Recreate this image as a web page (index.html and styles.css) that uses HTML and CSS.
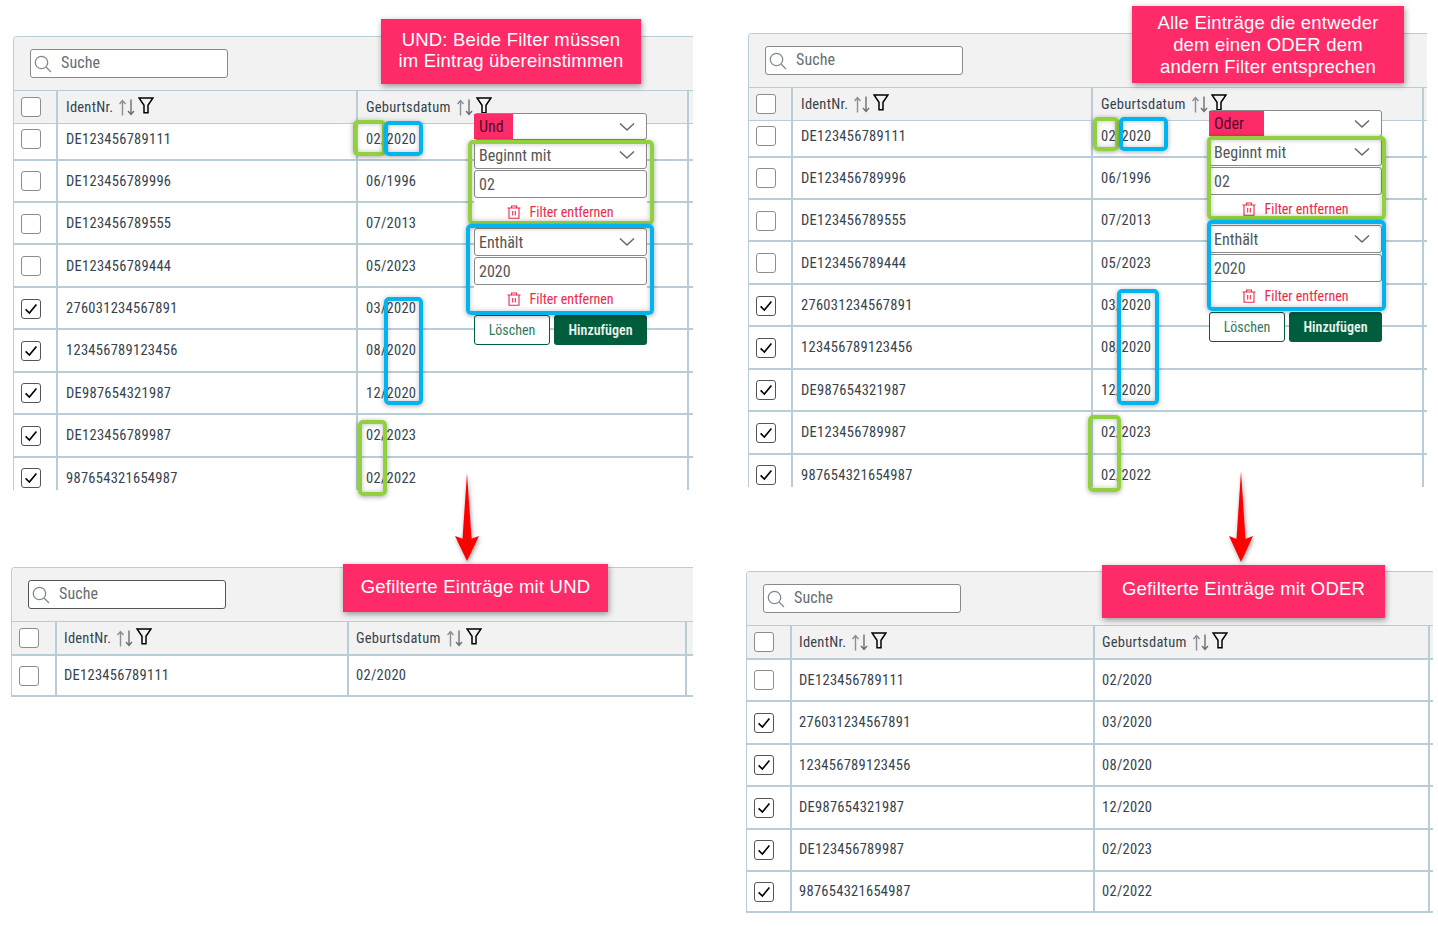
FILE: index.html
```html
<!DOCTYPE html>
<html lang="de">
<head>
<meta charset="utf-8">
<title>Filter UND / ODER</title>
<link rel="stylesheet" href="styles.css">
</head>
<body>
<svg class="sprite" aria-hidden="true">
  <symbol id="i-search" viewBox="0 0 18 18"><circle cx="7.5" cy="7.5" r="6.2" fill="none" stroke="#7f8a90" stroke-width="1.3"/><path d="M12 12l5 5" stroke="#7f8a90" stroke-width="1.3" fill="none"/></symbol>
  <symbol id="i-sort" viewBox="0 0 16 17"><path d="M3.5 16.5V1.5M.5 5L3.5 1.5L6.5 5" fill="none" stroke="#8a8f93" stroke-width="1.4"/><path d="M12 .5V15.5M9 12L12 15.5L15 12" fill="none" stroke="#6a7075" stroke-width="1.4"/></symbol>
  <symbol id="i-filter" viewBox="0 0 16 17"><path d="M1 1H15L10 8.2V15.8H6V8.2Z" fill="none" stroke="#000" stroke-width="1.5"/></symbol>
  <symbol id="i-check" viewBox="0 0 20 20"><path d="M4 10.5L8.2 14.5L16 5" fill="none" stroke="#000" stroke-width="1.8"/></symbol>
  <symbol id="i-chev" viewBox="0 0 16 10"><path d="M1 1.5L8 8L15 1.5" fill="none" stroke="#6a6a6a" stroke-width="1.6"/></symbol>
  <symbol id="i-trash" viewBox="0 0 14 14"><path d="M.5 3H13.5M2 3V13.2H12V3M4.5 3V1H9.5V3M5.7 6V10.5M8.3 6V10.5" fill="none" stroke="#ec2a49" stroke-width="1.1"/></symbol>
</svg>

<main class="canvas">

  <section class="panel panel-a">
    <div class="toolbar"><label class="search"><svg class="search-icon"><use href="#i-search"/></svg><span>Suche</span></label></div>
    <div class="row head"><div class="cell"><span class="box"></span></div><div class="cell"><span>IdentNr.</span><svg class="sort"><use href="#i-sort"/></svg><svg class="filter"><use href="#i-filter"/></svg></div><div class="cell"><span>Geburtsdatum</span><svg class="sort"><use href="#i-sort"/></svg><svg class="filter"><use href="#i-filter"/></svg></div></div>
    <div class="row first"><div class="cell"><span class="box"></span></div><div class="cell">DE123456789111</div><div class="cell">02/2020</div></div>
    <div class="row"><div class="cell"><span class="box"></span></div><div class="cell">DE123456789996</div><div class="cell">06/1996</div></div>
    <div class="row"><div class="cell"><span class="box"></span></div><div class="cell">DE123456789555</div><div class="cell">07/2013</div></div>
    <div class="row"><div class="cell"><span class="box"></span></div><div class="cell">DE123456789444</div><div class="cell">05/2023</div></div>
    <div class="row"><div class="cell"><span class="box on"><svg><use href="#i-check"/></svg></span></div><div class="cell">276031234567891</div><div class="cell">03/2020</div></div>
    <div class="row"><div class="cell"><span class="box on"><svg><use href="#i-check"/></svg></span></div><div class="cell">123456789123456</div><div class="cell">08/2020</div></div>
    <div class="row"><div class="cell"><span class="box on"><svg><use href="#i-check"/></svg></span></div><div class="cell">DE987654321987</div><div class="cell">12/2020</div></div>
    <div class="row"><div class="cell"><span class="box on"><svg><use href="#i-check"/></svg></span></div><div class="cell">DE123456789987</div><div class="cell">02/2023</div></div>
    <div class="row"><div class="cell"><span class="box on"><svg><use href="#i-check"/></svg></span></div><div class="cell">987654321654987</div><div class="cell">02/2022</div></div>
  </section>

  <section class="panel panel-b">
    <div class="toolbar"><label class="search"><svg class="search-icon"><use href="#i-search"/></svg><span>Suche</span></label></div>
    <div class="row head"><div class="cell"><span class="box"></span></div><div class="cell"><span>IdentNr.</span><svg class="sort"><use href="#i-sort"/></svg><svg class="filter"><use href="#i-filter"/></svg></div><div class="cell"><span>Geburtsdatum</span><svg class="sort"><use href="#i-sort"/></svg><svg class="filter"><use href="#i-filter"/></svg></div></div>
    <div class="row first"><div class="cell"><span class="box"></span></div><div class="cell">DE123456789111</div><div class="cell">02/2020</div></div>
    <div class="row"><div class="cell"><span class="box"></span></div><div class="cell">DE123456789996</div><div class="cell">06/1996</div></div>
    <div class="row"><div class="cell"><span class="box"></span></div><div class="cell">DE123456789555</div><div class="cell">07/2013</div></div>
    <div class="row"><div class="cell"><span class="box"></span></div><div class="cell">DE123456789444</div><div class="cell">05/2023</div></div>
    <div class="row"><div class="cell"><span class="box on"><svg><use href="#i-check"/></svg></span></div><div class="cell">276031234567891</div><div class="cell">03/2020</div></div>
    <div class="row"><div class="cell"><span class="box on"><svg><use href="#i-check"/></svg></span></div><div class="cell">123456789123456</div><div class="cell">08/2020</div></div>
    <div class="row"><div class="cell"><span class="box on"><svg><use href="#i-check"/></svg></span></div><div class="cell">DE987654321987</div><div class="cell">12/2020</div></div>
    <div class="row"><div class="cell"><span class="box on"><svg><use href="#i-check"/></svg></span></div><div class="cell">DE123456789987</div><div class="cell">02/2023</div></div>
    <div class="row"><div class="cell"><span class="box on"><svg><use href="#i-check"/></svg></span></div><div class="cell">987654321654987</div><div class="cell">02/2022</div></div>
  </section>

  <section class="panel panel-c">
    <div class="toolbar"><label class="search dark"><svg class="search-icon"><use href="#i-search"/></svg><span>Suche</span></label></div>
    <div class="row head"><div class="cell"><span class="box"></span></div><div class="cell"><span>IdentNr.</span><svg class="sort"><use href="#i-sort"/></svg><svg class="filter"><use href="#i-filter"/></svg></div><div class="cell"><span>Geburtsdatum</span><svg class="sort"><use href="#i-sort"/></svg><svg class="filter"><use href="#i-filter"/></svg></div></div>
    <div class="row"><div class="cell"><span class="box"></span></div><div class="cell">DE123456789111</div><div class="cell">02/2020</div></div>
  </section>

  <section class="panel panel-d">
    <div class="toolbar"><label class="search"><svg class="search-icon"><use href="#i-search"/></svg><span>Suche</span></label></div>
    <div class="row head"><div class="cell"><span class="box"></span></div><div class="cell"><span>IdentNr.</span><svg class="sort"><use href="#i-sort"/></svg><svg class="filter"><use href="#i-filter"/></svg></div><div class="cell"><span>Geburtsdatum</span><svg class="sort"><use href="#i-sort"/></svg><svg class="filter"><use href="#i-filter"/></svg></div></div>
    <div class="row"><div class="cell"><span class="box"></span></div><div class="cell">DE123456789111</div><div class="cell">02/2020</div></div>
    <div class="row"><div class="cell"><span class="box on"><svg><use href="#i-check"/></svg></span></div><div class="cell">276031234567891</div><div class="cell">03/2020</div></div>
    <div class="row"><div class="cell"><span class="box on"><svg><use href="#i-check"/></svg></span></div><div class="cell">123456789123456</div><div class="cell">08/2020</div></div>
    <div class="row"><div class="cell"><span class="box on"><svg><use href="#i-check"/></svg></span></div><div class="cell">DE987654321987</div><div class="cell">12/2020</div></div>
    <div class="row"><div class="cell"><span class="box on"><svg><use href="#i-check"/></svg></span></div><div class="cell">DE123456789987</div><div class="cell">02/2023</div></div>
    <div class="row"><div class="cell"><span class="box on"><svg><use href="#i-check"/></svg></span></div><div class="cell">987654321654987</div><div class="cell">02/2022</div></div>
  </section>

  <div class="popover pop-a">
    <div class="field first-field"><span class="tag tag-und">Und</span><svg class="chev"><use href="#i-chev"/></svg></div>
    <div class="field"><span>Beginnt mit</span><svg class="chev"><use href="#i-chev"/></svg></div>
    <div class="field input">02</div>
    <div class="remove"><svg class="trash"><use href="#i-trash"/></svg><span>Filter entfernen</span></div>
    <div class="field second"><span>Enthält</span><svg class="chev"><use href="#i-chev"/></svg></div>
    <div class="field input">2020</div>
    <div class="remove"><svg class="trash"><use href="#i-trash"/></svg><span>Filter entfernen</span></div>
    <div class="actions"><span class="btn ghost">Löschen</span><span class="btn solid">Hinzufügen</span></div>
  </div>

  <div class="popover pop-b">
    <div class="field first-field"><span class="tag tag-oder">Oder</span><svg class="chev"><use href="#i-chev"/></svg></div>
    <div class="field"><span>Beginnt mit</span><svg class="chev"><use href="#i-chev"/></svg></div>
    <div class="field input">02</div>
    <div class="remove"><svg class="trash"><use href="#i-trash"/></svg><span>Filter entfernen</span></div>
    <div class="field second"><span>Enthält</span><svg class="chev"><use href="#i-chev"/></svg></div>
    <div class="field input">2020</div>
    <div class="remove"><svg class="trash"><use href="#i-trash"/></svg><span>Filter entfernen</span></div>
    <div class="actions"><span class="btn ghost">Löschen</span><span class="btn solid">Hinzufügen</span></div>
  </div>

  <i class="mark green m1"></i><i class="mark blue m2"></i><i class="mark blue m3"></i><i class="mark green m4"></i><i class="mark green m5"></i><i class="mark blue m6"></i>
  <i class="mark green n1"></i><i class="mark blue n2"></i><i class="mark blue n3"></i><i class="mark green n4"></i><i class="mark green n5"></i><i class="mark blue n6"></i>

  <div class="note note-a">UND: Beide Filter müssen<br>im Eintrag übereinstimmen</div>
  <div class="note note-b">Alle Einträge die entweder<br>dem einen ODER dem<br>andern Filter entsprechen</div>
  <div class="note note-c">Gefilterte Einträge mit UND</div>
  <div class="note note-d">Gefilterte Einträge mit ODER</div>

  <svg class="arrow arrow-a" viewBox="0 0 24 92" preserveAspectRatio="none"><path d="M12 0L16.5 68L24 65L12 91L0 65L7.5 68Z" fill="#ff0000"/></svg>
  <svg class="arrow arrow-b" viewBox="0 0 24 92" preserveAspectRatio="none"><path d="M12 0L16.5 68L24 65L12 91L0 65L7.5 68Z" fill="#ff0000"/></svg>
</main>
</body>
</html>
```
FILE: styles.css
```css
* { box-sizing: border-box; }
html, body { margin: 0; padding: 0; background: #fff; }
body { font-family: "Roboto", "Liberation Sans", sans-serif; color: #36434d; overflow: hidden; }
.sprite { position: absolute; width: 0; height: 0; }
.canvas { position: relative; width: 1438px; height: 926px; overflow: hidden; }

/* screenshots laid on the free canvas */
.panel { position: absolute; background: #fff; border-left: 1px solid #b9cdd6; border-top: 1px solid #b9cdd6; border-top-left-radius: 4px; overflow: hidden; display: flex; flex-direction: column; }
.panel-a { left: 13px; top: 36px; width: 680px; height: 454px; --cols: 44px 300px 331px 5px; }
.panel-b { left: 748px; top: 33px; width: 679px; height: 454px; --cols: 44px 300px 331px 4px; }
.panel-c { left: 11px; top: 567px; width: 682px; height: 130px; --cols: 45px 292px 338px 7px; border-bottom: 1px solid #b9cdd6; }
.panel-d { left: 746px; top: 571px; width: 687px; height: 342px; --cols: 45px 303px 335px 4px; border-bottom: 1px solid #b9cdd6; }

.toolbar { height: 54px; flex: none; background: #f2f2f2; border-bottom: 1px solid #b9cdd6; padding: 12px 0 0 16px; }
.search { display: flex; align-items: center; width: 198px; height: 29px; padding-bottom: 3px; background: #fff; border: 1px solid #8a8a8a; border-radius: 3px; font-size: 16px; color: #666e73; font-stretch: 75%; letter-spacing: .1px; }
.search.dark { border-color: #555; }
.search-icon { width: 18px; height: 18px; margin: 3px 9px 0 3px; flex: none; }

.row { display: grid; grid-template-columns: var(--cols); height: 42.45px; flex: none; border-bottom: 2px solid #b9cdd6; font-size: 14.5px; font-stretch: 75%; letter-spacing: .28px; }
.row.head { height: 33px; background: #f2f2f2; border-bottom-width: 1px; letter-spacing: .25px; }
.panel-c .row.head, .panel-d .row.head { height: 34px; border-bottom-width: 2px; }
.panel-c .row:last-child, .panel-d .row:last-child { height: 41px; }
.row.first { height: 36.5px; }
.cell { display: flex; align-items: center; padding: 1px 0 0 8px; border-right: 2px solid #b9cdd6; white-space: nowrap; }
.row.first .cell { padding-top: 0; padding-bottom: 4px; }
.row.head .cell, .panel-c .cell, .panel-d .cell { padding-top: 0; }
.cell:first-child { padding-left: 7px; }
.panel-c .cell:nth-child(3), .panel-c .cell:nth-child(2), .panel-d .cell:nth-child(2), .panel-d .cell:nth-child(3) { padding-left: 7px; }

.box { width: 20px; height: 20px; display: block; background: #fff; border: 1px solid #8d8d8d; border-radius: 3px; }
.box.on { border-color: #555; }
.box svg { display: block; width: 18px; height: 18px; }

.sort { width: 16px; height: 17px; margin: 1px 0 0 6px; flex: none; }
.filter { width: 16px; height: 17px; margin: -4px 0 0 3px; flex: none; }

/* filter menus */
.popover { position: absolute; width: 173px; display: flex; flex-direction: column; font-size: 16px; font-stretch: 75%; color: #555; }
.pop-a { left: 474px; top: 113px; }
.pop-b { left: 1209px; top: 110px; }
.field { height: 28px; margin-bottom: 1px; background: #fff; border: 1px solid #8a8a8a; border-radius: 3px; display: flex; align-items: center; justify-content: space-between; padding: 0 11px 0 4px; }
.field.first-field { height: 27px; }
.field.input { margin-bottom: 0; padding-right: 4px; }
.field.second { margin-top: 2px; }
.chev { width: 16px; height: 10px; flex: none; }
.tag { align-self: stretch; display: flex; align-items: center; margin: 0 0 0 -5px; padding-left: 5px; color: #4f0f2c; }
.tag-und { width: 39px; background: #ff2a68; }
.tag-oder { width: 55px; background: #ff2a68; }
.remove { height: 28px; background: #fff; display: flex; align-items: center; justify-content: center; gap: 8px; font-size: 14px; color: #ec2a49; }
.trash { width: 14px; height: 14px; flex: none; }
.actions { display: flex; gap: 4px; margin-top: 2px; }
.btn { height: 30px; border-radius: 3px; display: flex; align-items: center; justify-content: center; font-size: 14px; }
.ghost { width: 76px; background: #fff; border: 1px solid #005e3c; color: #2f7a5c; }
.solid { width: 93px; background: #005e3c; color: #e8f2ee; font-weight: 600; }

/* coloured highlights */
.mark { position: absolute; display: block; border: 4px solid; border-radius: 5px; box-shadow: 0 1px 5px rgba(0,0,0,.35), inset 0 0 5px rgba(0,0,0,.25); }
.green { border-color: #92d13e; }
.blue { border-color: #00b4f0; }
.m1 { left: 353px; top: 120px; width: 33px; height: 36px; }
.m2 { left: 384px; top: 121px; width: 39px; height: 35px; }
.m3 { left: 384px; top: 297px; width: 39px; height: 108px; }
.m4 { left: 358px; top: 420px; width: 29px; height: 76px; }
.m5 { left: 468px; top: 140px; width: 186px; height: 85px; }
.m6 { left: 466px; top: 224px; width: 188px; height: 91px; }
.n1 { left: 1093px; top: 117px; width: 26px; height: 34px; }
.n2 { left: 1119px; top: 117px; width: 49px; height: 34px; }
.n3 { left: 1117px; top: 289px; width: 42px; height: 116px; }
.n4 { left: 1088px; top: 415px; width: 33px; height: 77px; }
.n5 { left: 1207px; top: 136px; width: 179px; height: 84px; }
.n6 { left: 1207px; top: 220px; width: 179px; height: 91px; }

/* callouts */
.note { position: absolute; display: flex; align-items: center; justify-content: center; text-align: center; background: #ff2a68; color: #fff; font-family: "Liberation Sans", Arial, sans-serif; font-size: 18.5px; line-height: 21px; letter-spacing: .2px; box-shadow: 1px 2px 6px rgba(0,0,0,.4); padding-bottom: 4px; }
.note-a { left: 381px; top: 19px; width: 260px; height: 65px; }
.note-b { left: 1132px; top: 6px; width: 272px; height: 77px; line-height: 22px; padding: 1px 0 0; }
.note-c { left: 343px; top: 564px; width: 265px; height: 48px; }
.note-d { left: 1102px; top: 565px; width: 283px; height: 53px; padding-bottom: 6px; }

.arrow { position: absolute; width: 24px; height: 92px; filter: drop-shadow(1px 2px 2px rgba(0,0,0,.4)); }
.arrow-a { left: 455px; top: 473px; height: 89px; }
.arrow-b { left: 1229px; top: 471px; }
```
